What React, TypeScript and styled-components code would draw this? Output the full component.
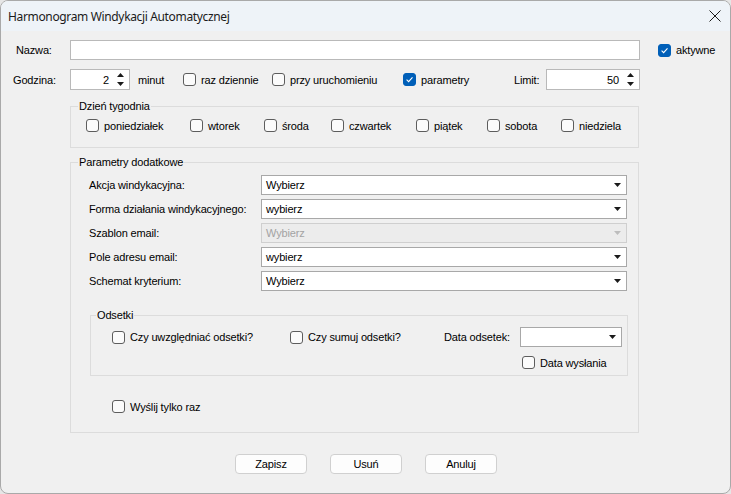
import React from 'react';
import styled, { createGlobalStyle } from 'styled-components';

const GlobalStyle = createGlobalStyle`
  html, body { margin: 0; padding: 0; background: #e6e6e6; }
  body { width: 731px; height: 494px; overflow: hidden; }
  *, *::before, *::after { box-sizing: border-box; }
`;

const Window = styled.div`
  width: 731px;
  height: 494px;
  display: flex;
  flex-direction: column;
  background: #f0f0f0;
  border: 1px solid #a9a9a9;
  border-radius: 8px;
  overflow: hidden;
  font-family: "Liberation Sans", Arial, sans-serif;
  font-size: 11px;
  letter-spacing: -0.15px;
  color: #000;
`;

const TitleBar = styled.div`
  height: 30px;
  flex: none;
  display: flex;
  align-items: center;
  justify-content: space-between;
  padding: 0 8px 0 7px;
  background: #eef3f8;
  font-family: "Segoe UI", "Noto Sans", sans-serif;
  font-size: 12px;
  letter-spacing: -0.35px;
  color: #1b1b1b;
`;

const CloseBtn = styled.span`
  width: 14px;
  height: 14px;
  display: inline-flex;
  align-items: center;
  justify-content: center;
`;

const Body = styled.div`
  flex: 1;
  display: flex;
  flex-direction: column;
  padding-top: 9px;
`;

const Row = styled.div<{ $cols: string; $mt?: number; $h?: number }>`
  display: grid;
  grid-template-columns: ${p => p.$cols};
  align-items: center;
  height: ${p => p.$h ?? 20}px;
  margin-top: ${p => p.$mt ?? 0}px;
`;

const Text = styled.span`
  white-space: nowrap;
`;

const TextBox = styled.div`
  height: 20px;
  background: #fff;
  border: 1px solid #b9b9b9;
`;

const NumBox = styled.div`
  height: 21px;
  background: #fff;
  border: 1px solid #b9b9b9;
  display: flex;
  align-items: center;
`;

const NumValue = styled.span`
  flex: 1;
  text-align: right;
  padding-right: 3px;
`;

const SpinArea = styled.span`
  width: 17px;
  height: 100%;
  display: inline-flex;
  align-items: center;
  justify-content: center;
`;

const Select = styled.div<{ $disabled?: boolean; $w?: number }>`
  height: 20px;
  width: ${p => (p.$w ? `${p.$w}px` : 'auto')};
  background: ${p => (p.$disabled ? '#ececec' : '#fff')};
  border: 1px solid ${p => (p.$disabled ? '#cfcfcf' : '#a8a8a8')};
  display: flex;
  align-items: center;
  padding-left: 4px;
  color: ${p => (p.$disabled ? '#a3a3a3' : '#000')};
`;

const SelectText = styled.span`
  flex: 1;
`;

const ArrowArea = styled.span`
  width: 17px;
  display: inline-flex;
  justify-content: center;
`;

const Box = styled.span<{ $checked?: boolean }>`
  width: 13px;
  height: 13px;
  flex: none;
  border-radius: 3px;
  border: 1px solid ${p => (p.$checked ? '#005fb8' : '#5d5d5d')};
  background: ${p => (p.$checked ? '#005fb8' : '#fbfbfb')};
  display: inline-flex;
  align-items: center;
  justify-content: center;
`;

const CheckLabel = styled.label<{ $ml?: number }>`
  display: inline-flex;
  align-items: center;
  gap: 5px;
  margin-left: ${p => p.$ml ?? 0}px;
  white-space: nowrap;
`;

const Group = styled.fieldset<{ $ml?: number; $mt?: number; $w: number }>`
  margin: ${p => p.$mt ?? 0}px 0 0 ${p => p.$ml ?? 0}px;
  width: ${p => p.$w}px;
  min-width: 0;
  border: 1px solid #dcdcdc;
  padding: 0;
`;

const Legend = styled.legend<{ $ml?: number }>`
  margin-left: ${p => p.$ml ?? 7}px;
  padding: 0 1px;
  line-height: 13px;
  height: 13px;
`;

const GroupContent = styled.div<{ $pad: string }>`
  padding: ${p => p.$pad};
`;

const DaysRow = styled.div`
  display: grid;
  grid-template-columns: 104px 74px 67px 85px 71px 74px auto;
  align-items: center;
  height: 13px;
`;

const ParamGrid = styled.div`
  display: grid;
  grid-template-columns: 172px 366px;
  grid-auto-rows: 20px;
  row-gap: 4px;
  align-items: center;
`;

const OdsetkiGrid = styled.div`
  display: grid;
  grid-template-columns: 178px 154px 76px 102px;
  grid-template-rows: 20px 13px;
  row-gap: 9px;
  align-items: center;
`;

const SingleRow = styled.div<{ $ml: number; $mt: number }>`
  display: flex;
  align-items: center;
  height: 13px;
  margin: ${p => p.$mt}px 0 0 ${p => p.$ml}px;
`;

const Buttons = styled.div`
  display: flex;
  justify-content: center;
  gap: 23px;
  margin-top: 21px;
  padding-left: 1px;
`;

const Button = styled.button`
  width: 72px;
  height: 20px;
  padding: 0;
  background: #fdfdfd;
  border: 1px solid #d0d0d0;
  border-radius: 4px;
  font-family: "Liberation Sans", Arial, sans-serif;
  font-size: 11px;
  letter-spacing: -0.15px;
  color: #000;
`;

const Check: React.FC<{ checked?: boolean; label: string; ml?: number }> = ({ checked, label, ml }) => (
  <CheckLabel $ml={ml}>
    <Box $checked={checked}>
      {checked && (
        <svg width="9" height="9" viewBox="0 0 9 9">
          <path d="M1.6 4.7 L3.6 6.6 L7.5 2.3" fill="none" stroke="#fff" strokeWidth="1.1" />
        </svg>
      )}
    </Box>
    <span>{label}</span>
  </CheckLabel>
);

const Spinner = () => (
  <SpinArea>
    <svg width="7" height="13" viewBox="0 0 7 13">
      <path d="M0 4 L3.5 0 L7 4 Z" fill="#1a1a1a" />
      <path d="M0 9 L3.5 13 L7 9 Z" fill="#1a1a1a" />
    </svg>
  </SpinArea>
);

const Num: React.FC<{ value: string }> = ({ value }) => (
  <NumBox>
    <NumValue>{value}</NumValue>
    <Spinner />
  </NumBox>
);

const Combo: React.FC<{ value?: string; disabled?: boolean; w?: number }> = ({ value, disabled, w }) => (
  <Select $disabled={disabled} $w={w}>
    <SelectText>{value}</SelectText>
    <ArrowArea>
      <svg width="7" height="4" viewBox="0 0 7 4">
        <path d="M0 0 L7 0 L3.5 4 Z" fill={disabled ? '#bdbdbd' : '#1a1a1a'} />
      </svg>
    </ArrowArea>
  </Select>
);

export default function App() {
  return (
    <>
      <GlobalStyle />
      <Window>
        <TitleBar>
          <span>Harmonogram Windykacji Automatycznej</span>
          <CloseBtn>
            <svg width="12" height="12" viewBox="0 0 12 12">
              <path d="M0.5 0.5 L11.5 11.5 M11.5 0.5 L0.5 11.5" stroke="#1b1b1b" strokeWidth="1" />
            </svg>
          </CloseBtn>
        </TitleBar>
        <Body>
          <Row $cols="15px 54px 570px 18px auto">
            <span />
            <Text>Nazwa:</Text>
            <TextBox />
            <span />
            <Check checked label="aktywne" />
          </Row>
          <Row $cols="12px 57px 60px 8px 45px 89px 131px 111px 32px 94px" $mt={9} $h={21}>
            <span />
            <Text>Godzina:</Text>
            <Num value="2" />
            <span />
            <Text>minut</Text>
            <Check label="raz dziennie" />
            <Check label="przy uruchomieniu" />
            <Check checked label="parametry" />
            <Text>Limit:</Text>
            <Num value="50" />
          </Row>
          <Group $ml={69} $mt={10} $w={569}>
            <Legend $ml={7}>Dzień tygodnia</Legend>
            <GroupContent $pad="6px 14px 15px 15px">
              <DaysRow>
                <Check label="poniedziałek" />
                <Check label="wtorek" />
                <Check label="środa" />
                <Check label="czwartek" />
                <Check label="piątek" />
                <Check label="sobota" />
                <Check label="niedziela" />
              </DaysRow>
            </GroupContent>
          </Group>
          <Group $ml={69} $mt={8} $w={569}>
            <Legend $ml={7}>Parametry dodatkowe</Legend>
            <GroupContent $pad="6px 10px 19px 18px">
              <ParamGrid>
                <Text>Akcja windykacyjna:</Text>
                <Combo value="Wybierz" />
                <Text>Forma działania windykacyjnego:</Text>
                <Combo value="wybierz" />
                <Text>Szablon email:</Text>
                <Combo value="Wybierz" disabled />
                <Text>Pole adresu email:</Text>
                <Combo value="wybierz" />
                <Text>Schemat kryterium:</Text>
                <Combo value="Wybierz" />
              </ParamGrid>
              <Group $ml={1} $mt={18} $w={538}>
                <Legend $ml={5}>Odsetki</Legend>
                <GroupContent $pad="5px 5px 6px 21px">
                  <OdsetkiGrid>
                    <Check label="Czy uwzględniać odsetki?" />
                    <Check label="Czy sumuj odsetki?" />
                    <Text>Data odsetek:</Text>
                    <Combo w={102} />
                    <span />
                    <span />
                    <span />
                    <Check label="Data wysłania" ml={2} />
                  </OdsetkiGrid>
                </GroupContent>
              </Group>
              <SingleRow $ml={23} $mt={24}>
                <Check label="Wyślij tylko raz" />
              </SingleRow>
            </GroupContent>
          </Group>
          <Buttons>
            <Button>Zapisz</Button>
            <Button>Usuń</Button>
            <Button>Anuluj</Button>
          </Buttons>
        </Body>
      </Window>
    </>
  );
}
